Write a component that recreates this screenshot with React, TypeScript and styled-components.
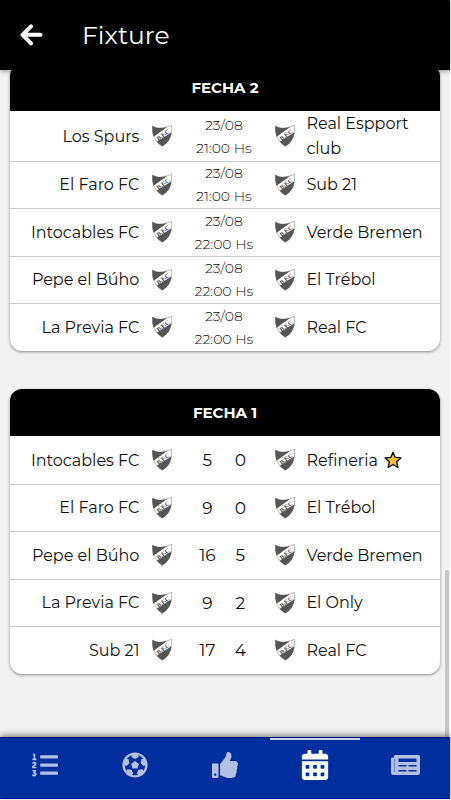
import React from "react";
import styled, { createGlobalStyle } from "styled-components";
import { FaCalendarAlt, FaFutbol, FaListOl, FaThumbsUp } from "react-icons/fa";

const GlobalStyle = createGlobalStyle`
  * { box-sizing: border-box; }
  body {
    margin: 0;
    background: #fff;
    color: #111;
    font-family: Montserrat, Inter, "Open Sans", sans-serif;
    font-weight: 400;
  }
`;

const Screen = styled.div`
  display: flex;
  flex-direction: column;
  height: 100vh;
  padding: 0 1px 1px 0;
  overflow: hidden;
`;

const TopBar = styled.header`
  position: relative;
  z-index: 1;
  flex: none;
  display: flex;
  align-items: center;
  gap: 39px;
  height: 70px;
  padding: 0 20px;
  background: #000;
  color: #fff;
  box-shadow: 0 1px 5px rgba(0, 0, 0, 0.4);
`;

const BackButton = styled.button`
  display: flex;
  padding: 0;
  border: 0;
  background: none;
  color: inherit;
  cursor: pointer;
`;

const Title = styled.h1`
  margin: 0;
  font-size: 25px;
  line-height: 32px;
  font-weight: 400;
`;

const Content = styled.main`
  position: relative;
  flex: 1;
  min-height: 0;
  overflow: hidden;
  background: #f2f2f2;
`;

const Rounds = styled.div`
  display: flex;
  flex-direction: column;
  gap: 38px;
  margin-top: -6px;
  padding: 0 10px;
`;

const ScrollThumb = styled.div`
  position: absolute;
  right: 1px;
  bottom: 0;
  width: 4px;
  height: 25%;
  border-radius: 1px 1px 0 0;
  background: #c6c6c6;
`;

const Card = styled.section`
  overflow: hidden;
  border-radius: 12px;
  background: #fff;
  box-shadow: 0 1px 3px rgba(0, 0, 0, 0.45);
`;

const CardTitle = styled.h2`
  margin: 0;
  padding: 12px 0 11px;
  background: #000;
  color: #fff;
  text-align: center;
  font-size: 15px;
  line-height: 24px;
  font-weight: 700;
`;

const Matches = styled.ul`
  margin: 0;
  padding: 0;
  list-style: none;
`;

const Match = styled.li`
  display: grid;
  grid-template-columns: minmax(0, 132fr) 20px 103px 20px minmax(0, 134fr);
  align-items: center;
  min-height: 48px;
  &:nth-child(even) {
    min-height: 47px;
  }
  & + & {
    box-shadow: inset 0 1px #ccc;
  }
`;

const Team = styled.span<{ $side: "home" | "away" }>`
  display: flex;
  align-items: center;
  gap: 6px;
  justify-content: ${(p) => (p.$side === "home" ? "flex-end" : "flex-start")};
  padding: ${(p) => (p.$side === "home" ? "0 13px 0 0" : "0 8px 0 11px")};
  font-size: 16px;
  line-height: 25px;
`;

const Score = styled.span`
  display: flex;
  justify-content: center;
  font-size: 17px;
  line-height: 24px;
`;

const Goals = styled.span`
  width: 33px;
  text-align: center;
`;

const Kickoff = styled.time`
  display: flex;
  flex-direction: column;
  align-items: center;
  padding-top: 1px;
  font-size: 14px;
  font-weight: 300;
  line-height: 23px;
`;

const Tabs = styled.nav`
  position: relative;
  flex: none;
  display: grid;
  grid-template-columns: repeat(5, 1fr);
  height: 62px;
  background: #002e9e;
  border-top: 1px solid #00107c;
  border-bottom: 1px solid #0010a0;
  box-shadow: 0 -2px 6px rgba(0, 0, 0, 0.45);
`;

const Tab = styled.button<{ $active: boolean }>`
  display: flex;
  align-items: center;
  justify-content: center;
  padding: 0 0 6px;
  border: 0;
  background: none;
  color: ${(p) => (p.$active ? "#fff" : "#b2c0e2")};
  font-size: ${(p) => (p.$active ? "30px" : "26px")};
  box-shadow: ${(p) => (p.$active ? "inset 0 2px #ccd5ec" : "none")};
  cursor: pointer;
`;

const BackArrow = () => (
  <svg width="23" height="22" viewBox="0 0 23 22" aria-hidden="true">
    <path
      d="M20.500 10.800H3M11 2.400 2.600 10.800 11 19.400"
      fill="none"
      stroke="currentColor"
      strokeWidth="4"
      strokeLinecap="round"
      strokeLinejoin="round"
    />
  </svg>
);

const Newspaper = () => (
  <svg width="29" height="20" viewBox="0 0 29 20" aria-hidden="true">
    <path
      fill="currentColor"
      fillRule="evenodd"
      d="M5 0H27.500A1.500 1.500 0 0 1 29 1.500V18A2 2 0 0 1 27 20H2.500A2.500 2.500 0 0 1 0 17.500V4A1.500 1.500 0 0 1 1.500 2.500H3V1.500A1.500 1.500 0 0 1 5 0ZM7.500 3.500V7H25.500V3.500ZM7.500 10V11.500H15.500V10ZM17.500 10V11.500H25.500V10ZM7.500 15V16.500H15.500V15ZM17.500 15V16.500H25.500V15Z"
    />
    <path d="M3.500 4V17" stroke="#7186c6" strokeWidth="1.200" />
  </svg>
);

const Crest = () => (
  <svg width="20" height="22" viewBox="0 0 20 22" aria-hidden="true">
    <path
      d="M.4 1C3 2.800 7 3.500 10 3 13.500 2.500 17 1.200 19.600.4 20 9 18.600 16 10.200 21.300 2.500 16.500 0 9.500.4 1Z"
      fill="#fff"
      stroke="#888"
      strokeWidth=".6"
    />
    <path d="M.4 1C4 3.200 9 3.700 15.200 2L1.600 11.800C.6 8.500.2 5 .4 1Z" fill="#555" />
    <path d="M19.400 7.200C18.600 13.500 16 18 10.200 21.300 8 20 6.200 18.400 4.700 16.800Z" fill="#555" />
    <text
      x="11"
      y="11.800"
      transform="rotate(-37 11 9.700)"
      textAnchor="middle"
      fontFamily="Liberation Serif, serif"
      fontWeight="700"
      fontSize="6"
      fill="#444"
    >
      B.F.C
    </text>
  </svg>
);

const Star = () => (
  <svg width="18" height="18" viewBox="0 0 18 18" role="img" aria-label="Destacado">
    <path
      d="M9 1.200 11.200 6.400 16.900 6.900 12.600 10.700 13.900 16.500 9 13.500 4.100 16.500 5.400 10.700 1.100 6.900 6.800 6.400Z"
      fill="#fbc02d"
      stroke="#111"
      strokeWidth="1.400"
      strokeLinejoin="round"
    />
  </svg>
);

type Fixture = {
  home: string;
  away: string;
  date?: string;
  time?: string;
  goals?: [number, number];
  star?: boolean;
};

const rounds: { title: string; matches: Fixture[] }[] = [
  {
    title: "FECHA 2",
    matches: [
      { home: "Los Spurs", away: "Real Espport club", date: "23/08", time: "21:00 Hs" },
      { home: "El Faro FC", away: "Sub 21", date: "23/08", time: "21:00 Hs" },
      { home: "Intocables FC", away: "Verde Bremen", date: "23/08", time: "22:00 Hs" },
      { home: "Pepe el Búho", away: "El Trébol", date: "23/08", time: "22:00 Hs" },
      { home: "La Previa FC", away: "Real FC", date: "23/08", time: "22:00 Hs" },
    ],
  },
  {
    title: "FECHA 1",
    matches: [
      { home: "Intocables FC", away: "Refineria", goals: [5, 0], star: true },
      { home: "El Faro FC", away: "El Trébol", goals: [9, 0] },
      { home: "Pepe el Búho", away: "Verde Bremen", goals: [16, 5] },
      { home: "La Previa FC", away: "El Only", goals: [9, 2] },
      { home: "Sub 21", away: "Real FC", goals: [17, 4] },
    ],
  },
];

const tabs = [
  { label: "Posiciones", Icon: FaListOl },
  { label: "Goleadores", Icon: FaFutbol },
  { label: "Fair play", Icon: FaThumbsUp },
  { label: "Fixture", Icon: FaCalendarAlt },
  { label: "Noticias", Icon: Newspaper },
];

export default function App() {
  const [active, setActive] = React.useState("Fixture");
  return (
    <Screen>
      <GlobalStyle />
      <TopBar>
        <BackButton aria-label="Volver">
          <BackArrow />
        </BackButton>
        <Title>Fixture</Title>
      </TopBar>
      <Content>
        <Rounds>
          {rounds.map((round) => (
            <Card key={round.title}>
              <CardTitle>{round.title}</CardTitle>
              <Matches>
                {round.matches.map((m) => (
                  <Match key={m.home}>
                    <Team $side="home">{m.home}</Team>
                    <Crest />
                    {m.goals ? (
                      <Score>
                        <Goals>{m.goals[0]}</Goals>
                        <Goals>{m.goals[1]}</Goals>
                      </Score>
                    ) : (
                      <Kickoff>
                        <span>{m.date}</span>
                        <span>{m.time}</span>
                      </Kickoff>
                    )}
                    <Crest />
                    <Team $side="away">
                      {m.away}
                      {m.star && <Star />}
                    </Team>
                  </Match>
                ))}
              </Matches>
            </Card>
          ))}
        </Rounds>
        <ScrollThumb />
      </Content>
      <Tabs>
        {tabs.map(({ label, Icon }) => (
          <Tab
            key={label}
            aria-label={label}
            $active={label === active}
            onClick={() => setActive(label)}
          >
            <Icon />
          </Tab>
        ))}
      </Tabs>
    </Screen>
  );
}
